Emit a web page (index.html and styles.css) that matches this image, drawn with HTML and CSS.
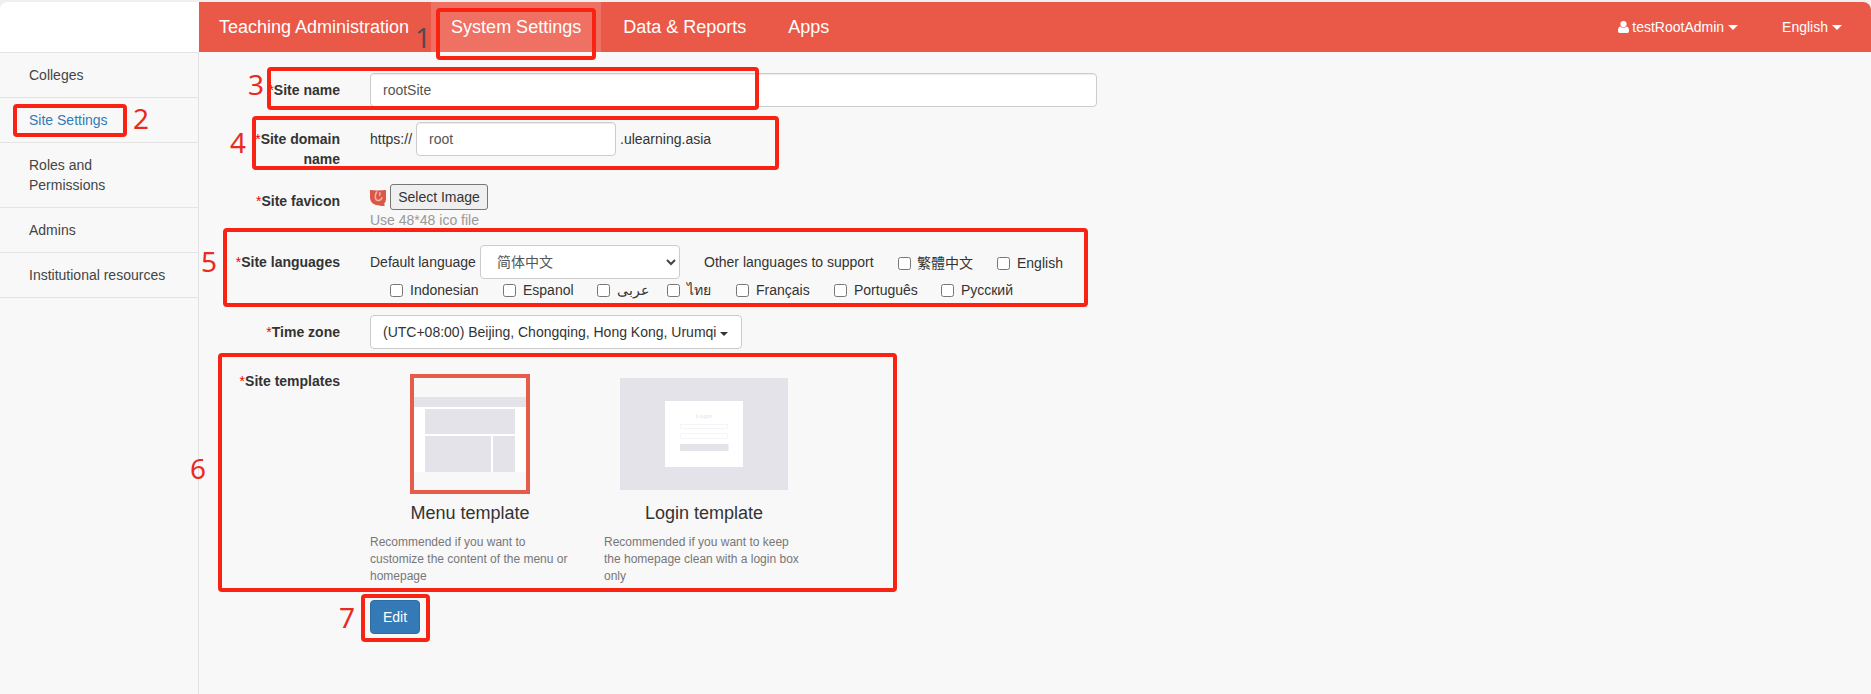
FILE: index.html
```html
<!DOCTYPE html>
<html lang="en">
<head>
<meta charset="utf-8">
<title>Site Settings</title>
<link rel="stylesheet" href="styles.css">
</head>
<body>
<div class="app">
  <aside class="sidebar">
    <div class="brand"></div>
    <a class="side-item">Colleges</a>
    <a class="side-item active">Site Settings</a>
    <a class="side-item">Roles and<br>Permissions</a>
    <a class="side-item">Admins</a>
    <a class="side-item">Institutional resources</a>
  </aside>
  <div class="main">
    <header class="topbar">
      <nav class="nav">
        <a class="nav-item">Teaching Administration</a>
        <a class="nav-item active">System Settings</a>
        <a class="nav-item">Data &amp; Reports</a>
        <a class="nav-item">Apps</a>
      </nav>
      <div class="user-menu">
        <svg class="user-icon" viewBox="0 0 11 12"><circle cx="5.5" cy="3.1" r="3.1"/><path d="M2.4 5.5C.6 5.9 0 7.600 0 9.700 0 11.200.8 12 2 12h7c1.200 0 2-.8 2-2.300 0-2.100-.6-3.800-2.400-4.200-1.700 1.600-4.500 1.600-6.200 0z"/></svg>
        <span>testRootAdmin</span><i class="caret"></i>
      </div>
      <div class="lang-menu"><span>English</span><i class="caret"></i></div>
    </header>

    <form class="form">
      <div class="row row-name">
        <label class="label"><b>*</b>Site name</label>
        <input class="input wide" value="rootSite">
      </div>
      <div class="row row-domain">
        <label class="label"><b>*</b>Site domain name</label>
        <span class="pre">https://</span><input class="input short" value="root"><span class="post">.ulearning.asia</span>
      </div>
      <div class="row row-icon">
        <label class="label"><b>*</b>Site favicon</label>
        <div>
          <div class="picker">
            <svg class="favicon" viewBox="0 0 16 16"><path fill="#db5848" d="M0 0c5 .6 10 .6 16 0v9c0 2-.7 3.300-1.700 4.300L14.600 16c-2.600.2-4.600-.3-6.600-.8C3 14.800 0 12 0 7z"/><path fill="none" stroke="#f3b5aa" stroke-width="1.500" stroke-linecap="round" d="M6.600 2C4.800 5 4.600 10 7.600 10.500c2.200.3 3.900-1 4.200-2.800M9.800 2.800v2.400"/></svg>
            <button type="button" class="file-btn">Select Image</button>
          </div>
          <div class="hint">Use 48*48 ico file</div>
        </div>
      </div>
      <div class="row row-lang">
        <label class="label"><b>*</b>Site languages</label>
        <div>
          <div class="langs first">
            <span>Default language</span>
            <div class="input select"><span>简体中文</span><svg viewBox="0 0 10 7"><path d="M1 1l4 4 4-4" fill="none" stroke="#444" stroke-width="2"/></svg></div>
            <span class="other">Other languages to support</span>
            <label class="check zh"><i></i>繁體中文</label>
            <label class="check en"><i></i>English</label>
          </div>
          <div class="langs second">
            <label class="check w113"><i></i>Indonesian</label>
            <label class="check w94"><i></i>Espanol</label>
            <label class="check w70 ar"><i></i>عربى</label>
            <label class="check w69 th"><i></i>ไทย</label>
            <label class="check w98"><i></i>Français</label>
            <label class="check w107"><i></i>Português</label>
            <label class="check"><i></i>Русский</label>
          </div>
        </div>
      </div>
      <div class="row row-zone">
        <label class="label"><b>*</b>Time zone</label>
        <div class="input zone"><span>(UTC+08:00) Beijing, Chongqing, Hong Kong, Urumqi</span><i class="caret small"></i></div>
      </div>
      <div class="row row-tpl">
        <label class="label"><b>*</b>Site templates</label>
        <div class="tpls">
          <div class="tpl">
            <div class="thumb chosen">
              <svg viewBox="0 0 112 112"><path fill="#fff" d="M0 19h112v75H0z"/><path fill="#e4e3ea" d="M0 19h112v10H0zM11 31h90v25H11zM11 58h66v36H11zM79 58h22v36H79z"/></svg>
            </div>
            <h4>Menu template</h4>
            <p>Recommended if you want to customize the content of the menu or homepage</p>
          </div>
          <div class="tpl">
            <div class="thumb login">
              <svg viewBox="0 0 168 112"><path fill="#e4e3ea" d="M0 0h168v112H0z"/><path fill="#fff" d="M45 23h78v66H45z"/><path fill="none" stroke="#f5f5f7" d="M60.500 46.500h47v4h-47zM60.500 55.500h47v5h-47z"/><path fill="#e4e3ea" d="M60 66h48.500v7H60z"/><text x="84" y="40" text-anchor="middle" class="tiny">Login</text></svg>
            </div>
            <h4>Login template</h4>
            <p>Recommended if you want to keep the homepage clean with a login box only</p>
          </div>
        </div>
      </div>
      <button type="button" class="edit">Edit</button>
    </form>
  </div>
</div>

<div class="mark m1"></div><div class="mark m2"></div><div class="mark m3"></div><div class="mark m4"></div><div class="mark m5"></div><div class="mark m6"></div><div class="mark m7"></div>
<span class="num n1">1</span><span class="num n2">2</span><span class="num n3">3</span><span class="num n4">4</span><span class="num n5">5</span><span class="num n6">6</span><span class="num n7">7</span>
</body>
</html>
```

FILE: styles.css
```css
* { box-sizing: border-box; }
body {
  margin: 0;
  padding-top: 2px;
  height: 694px;
  overflow: hidden;
  position: relative;
  background: #f0f0f0;
  font: 14px/20px "Liberation Sans", Arial, "Noto Sans CJK SC", sans-serif;
  color: #333;
}
.app {
  display: flex;
  height: 692px;
  background: #f8f8f8;
  border-radius: 8px 8px 0 0;
  overflow: hidden;
}
.sidebar { width: 199px; border-right: 1px solid #e2e2e6; flex: none; }
.brand { height: 51px; width: 199px; background: #fff; border-bottom: 1px solid #e4e4e4; }
.side-item {
  display: block;
  padding: 12px 20px 12px 29px;
  border-bottom: 1px solid #e4e4e4;
  color: #444;
}
.side-item.active { color: #337ab7; }
.main { flex: 1; min-width: 0; }

.topbar { display: flex; align-items: center; height: 50px; background: #ea5947; color: #fff; }
.nav { display: flex; gap: 2px; flex: 1; }
.nav-item { padding: 0 20px; font-size: 18px; line-height: 50px; }
.nav-item.active { background: #ee7163; }
.user-menu, .lang-menu { display: flex; align-items: center; }
.user-menu { margin-right: 44px; }
.lang-menu { margin-right: 29px; }
.user-icon { width: 11px; height: 12px; margin-right: 3px; fill: #fff; }
.caret { margin-left: 4px; border: 5px solid transparent; border-top: 5px solid; border-bottom: 0; }
.caret.small { border-width: 4px 4px 0; margin: 3px 0 0 4px; }

.form { padding: 21px 0 0 15px; }
.row { display: flex; align-items: flex-start; }
.label { width: 126px; margin-right: 30px; padding-top: 7px; text-align: right; font-weight: bold; flex: none; }
.label b { color: #e00; font-weight: normal; }
.input {
  height: 34px;
  padding: 6px 12px;
  border: 1px solid #ccc;
  border-radius: 4px;
  background: #fff;
  font: inherit;
  color: #555;
  box-shadow: inset 0 1px 1px rgba(0,0,0,.075);
}
.wide { width: 727px; }
.row-domain { margin-top: 15px; height: 62px; }
.row-domain .label { padding-left: 20px; }
.short { width: 200px; }
.pre, .post { padding-top: 7px; }
.pre { width: 46px; }
.post { margin-left: 4px; }
.row-icon { height: 46px; }
.row-icon .label { padding-top: 7px; }
.picker { display: flex; gap: 4px; }
.favicon { width: 16px; height: 16px; margin-top: 6px; }
.file-btn {
  width: 98px; height: 26px; padding: 0;
  border: 1px solid #767676; border-radius: 3px;
  background: #efefef; color: #333; font: inherit;
}
.hint { color: #999; }
.row-lang { margin-top: 15px; height: 70px; }
.langs { display: flex; align-items: center; }
.first { height: 34px; }
.first > span { white-space: nowrap; }
.first > span:first-child { width: 110px; }
.select { width: 200px; display: flex; align-items: center; justify-content: space-between; padding: 0 3px 0 16px; box-shadow: none; }
.select svg { width: 10px; height: 7px; }
.other { margin-left: 24px; width: 194px; }
.check { display: flex; align-items: center; white-space: nowrap; }
.check i { width: 13px; height: 13px; margin-right: 7px; border: 1px solid #767676; border-radius: 2.5px; background: #fff; flex: none; }
.zh { width: 99px; margin-top: 2px; }
.zh i { margin-right: 6px; }
.en { margin-top: 2px; }
.second { padding-left: 20px; height: 20px; margin-top: 1px; }
.w113 { width: 113px; } .w94 { width: 94px; } .w70 { width: 70px; }
.w69 { width: 69px; } .w98 { width: 98px; } .w107 { width: 107px; }
.row-zone { height: 49px; }
.zone { display: flex; align-items: center; color: #333; padding: 0 12px; box-shadow: none; white-space: nowrap; width: 372px; }
.tpls { display: flex; gap: 34px; padding-top: 10px; }
.tpl { width: 200px; }
.thumb { height: 120px; margin: 0 auto; }
.thumb svg { display: block; }
.chosen { width: 120px; border: 4px solid #e65c4b; }
.login { width: 168px; padding: 4px 0; }
.tiny { font-size: 6px; font-weight: bold; fill: #e9e9ed; }
.tpl h4 { margin: 9px 0 11px; font-size: 18px; line-height: 20px; font-weight: normal; text-align: center; }
.tpl p { margin: 0; font-size: 12px; line-height: 17.14px; color: #777; }
.edit {
  display: block; width: 50px; height: 34px; margin: 14.6px 0 0 156px; padding: 0;
  border: 1px solid #2e6da4; border-radius: 4px; background: #337ab7; color: #fff; font: inherit;
}

/* Numbered step annotations lying over the page */
.mark { position: absolute; border: 4px solid #f92314; border-radius: 4px; }
.m1 { left: 436px; top: 8px; width: 160px; height: 52px; }
.m2 { left: 13px; top: 104px; width: 114px; height: 33px; }
.m3 { left: 267px; top: 67px; width: 492px; height: 43px; }
.m4 { left: 252px; top: 116px; width: 527px; height: 54px; }
.m5 { left: 223px; top: 228px; width: 865px; height: 79px; }
.m6 { left: 218px; top: 353px; width: 679px; height: 239px; }
.m7 { left: 361px; top: 594px; width: 69px; height: 48px; }
.num { position: absolute; font: 28px/30px "Noto Sans", "Open Sans", sans-serif; color: #e82b1e; }
.n1 { left: 415px; top: 22px; color: #59484a; }
.n2 { left: 133px; top: 103px; }
.n3 { left: 248px; top: 69px; }
.n4 { left: 230px; top: 127px; }
.n5 { left: 201px; top: 246px; }
.n6 { left: 190px; top: 453px; }
.n7 { left: 339px; top: 602px; }
```
